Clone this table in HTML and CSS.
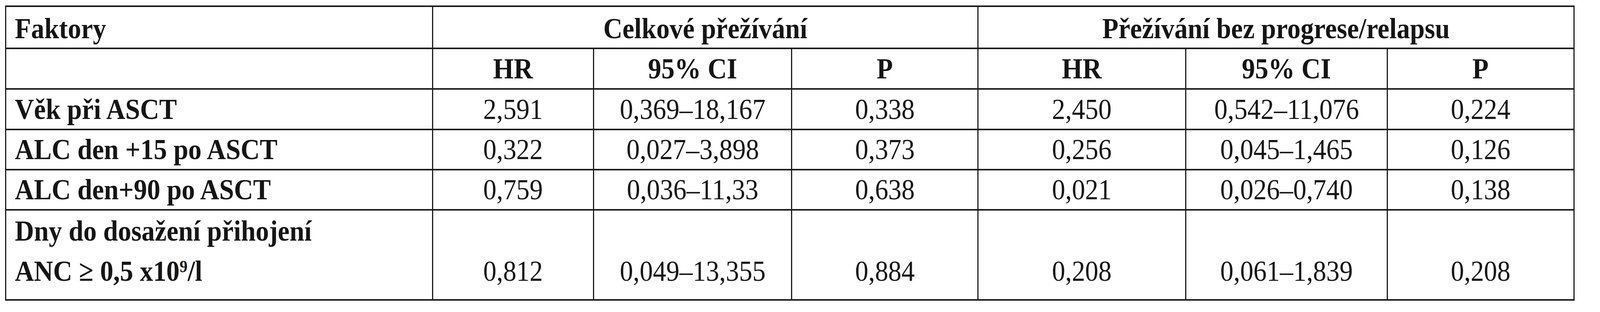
FILE: index.html
```html
<!DOCTYPE html>
<html lang="cs">
<head>
<meta charset="utf-8">
<title>Faktory</title>
<link rel="stylesheet" href="styles.css">
</head>
<body>
<table class="stats">
  <colgroup>
    <col class="c-label">
    <col class="c-hr">
    <col class="c-ci1">
    <col class="c-p1">
    <col class="c-hr2">
    <col class="c-ci2">
    <col class="c-p2">
  </colgroup>
  <tr class="r-head1">
    <th class="label"><span class="t">Faktory</span></th>
    <th colspan="3" class="group group-a"><span class="t">Celkové přežívání</span></th>
    <th colspan="3" class="group group-b"><span class="t">Přežívání bez progrese/relapsu</span></th>
  </tr>
  <tr class="r-head2">
    <th class="label"></th>
    <th><span class="t">HR</span></th>
    <th><span class="t">95% CI</span></th>
    <th><span class="t">P</span></th>
    <th><span class="t">HR</span></th>
    <th><span class="t">95% CI</span></th>
    <th><span class="t">P</span></th>
  </tr>
  <tr class="r-a">
    <th class="label"><span class="t">Věk při ASCT</span></th>
    <td><span class="t">2,591</span></td>
    <td><span class="t">0,369–18,167</span></td>
    <td><span class="t">0,338</span></td>
    <td><span class="t">2,450</span></td>
    <td><span class="t">0,542–11,076</span></td>
    <td><span class="t">0,224</span></td>
  </tr>
  <tr class="r-b">
    <th class="label"><span class="t">ALC den +15 po ASCT</span></th>
    <td><span class="t">0,322</span></td>
    <td><span class="t">0,027–3,898</span></td>
    <td><span class="t">0,373</span></td>
    <td><span class="t">0,256</span></td>
    <td><span class="t">0,045–1,465</span></td>
    <td><span class="t">0,126</span></td>
  </tr>
  <tr class="r-c">
    <th class="label"><span class="t">ALC den+90 po ASCT</span></th>
    <td><span class="t">0,759</span></td>
    <td><span class="t">0,036–11,33</span></td>
    <td><span class="t">0,638</span></td>
    <td><span class="t">0,021</span></td>
    <td><span class="t">0,026–0,740</span></td>
    <td><span class="t">0,138</span></td>
  </tr>
  <tr class="r-d">
    <th class="label two-line"><span class="t">Dny do dosažení přihojení<br>ANC ≥ 0,5 x10<sup>9</sup>/l</span></th>
    <td><span class="t">0,812</span></td>
    <td><span class="t">0,049–13,355</span></td>
    <td><span class="t">0,884</span></td>
    <td><span class="t">0,208</span></td>
    <td><span class="t">0,061–1,839</span></td>
    <td><span class="t">0,208</span></td>
  </tr>
</table>
</body>
</html>
```

FILE: styles.css
```css
:root {
  --sx: 1;
}

@media (max-width: 4526px) {
  :root {
    --sx: 0.904793;
  }
}

html, body {
  margin: 0;
  padding: 0;
  background: #ffffff;
}

body {
  padding: 14px 0 0 0.3093vw;
  font-family: "Liberation Serif", "Times New Roman", serif;
  color: #151515;
}

.stats {
  border-collapse: collapse;
  table-layout: fixed;
  width: 98.1003vw;
  font-size: 75px;
}

.c-label { width: 27.224%; }
.c-hr    { width: 10.268%; }
.c-ci1   { width: 12.632%; }
.c-p1    { width: 11.867%; }
.c-hr2   { width: 13.263%; }
.c-ci2   { width: 12.835%; }
.c-p2    { width: 11.911%; }

.stats th,
.stats td {
  border-top: 4px solid #1c1c1c;
  border-bottom: 4px solid #1c1c1c;
  border-left: 3px solid #1c1c1c;
  border-right: 3px solid #1c1c1c;
  padding: 0;
  text-align: center;
  vertical-align: middle;
  white-space: nowrap;
  line-height: 1.15;
}

.stats th {
  font-weight: bold;
}

.stats td {
  font-weight: normal;
}

.t {
  display: inline-block;
  transform: scaleX(var(--sx));
  transform-origin: 50% 50%;
}

.stats .label {
  text-align: left;
  padding-left: 0.5523vw;
}

.stats .label .t {
  transform-origin: 0 50%;
}

.r-head1 { height: 108px; }
.r-head2 { height: 104px; }
.r-a { height: 104px; }
.r-b { height: 103px; }
.r-c { height: 103px; }
.r-d { height: 231px; }

.r-head1 th {
  padding-top: 6px;
}

.group-a {
  padding-right: 1.1929vw;
}

.group-b {
  padding-left: 2.0764vw;
}

.r-d th,
.r-d td {
  line-height: 103px;
}

.r-d .two-line {
  vertical-align: top;
  padding-top: 0;
}

.r-d td {
  vertical-align: bottom;
  padding-bottom: 21px;
}

.two-line sup {
  font-size: 0.6em;
  line-height: 0;
  vertical-align: 0.5em;
}
```
